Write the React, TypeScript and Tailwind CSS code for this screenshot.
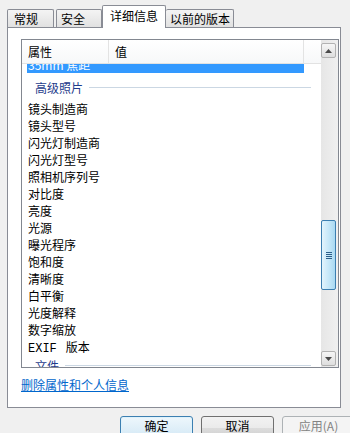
import React from 'react';

const items = [
  '镜头制造商',
  '镜头型号',
  '闪光灯制造商',
  '闪光灯型号',
  '照相机序列号',
  '对比度',
  '亮度',
  '光源',
  '曝光程序',
  '饱和度',
  '清晰度',
  '白平衡',
  '光度解释',
  '数字缩放',
];

const Arrow: React.FC<{ down?: boolean }> = ({ down = false }) => (
  <svg width="7" height="4" viewBox="0 0 7 4" className={down ? 'rotate-180' : ''}>
    <polygon points="3.5,0 7,4 0,4" fill="#4a4a4a" />
  </svg>
);

const ScrollButton: React.FC<{ down?: boolean; className?: string }> = ({ down, className = '' }) => (
  <div
    className={`w-[15px] h-[15px] rounded-[2px] border border-[#b2b2b2] bg-gradient-to-b from-[#f6f6f6] to-[#dedede] flex items-center justify-center ${className}`}
  >
    <Arrow down={down} />
  </div>
);

const App: React.FC = () => {
  return (
    <div className="w-[350px] h-[433px] overflow-hidden bg-[#f0f0f0] text-[12px] text-black font-['Noto_Sans_CJK_SC','Liberation_Sans',sans-serif] select-none">
      {/* tabs */}
      <div className="flex items-end h-[27px] pl-[7px]">
        <div className="w-[47px] h-[18px] pl-[6px] flex items-center leading-[16px] rounded-t-[2px] border border-b-0 border-[#898c95] bg-gradient-to-b from-[#f4f4f4] to-[#e1e1e1]">
          常规
        </div>
        <div className="ml-[2px] w-[46px] h-[18px] pl-[4px] flex items-center leading-[16px] rounded-t-[2px] border border-b-0 border-[#898c95] bg-gradient-to-b from-[#f4f4f4] to-[#e1e1e1]">
          安全
        </div>
        <div className="relative z-10 -mb-px w-[64px] h-[23px] pl-[7px] pt-[2px] leading-[16px] rounded-t-[2px] border border-b-0 border-[#898c95] bg-white">
          详细信息
        </div>
        <div className="w-[68px] h-[18px] pl-[4px] flex items-center leading-[16px] rounded-t-[2px] border border-b-0 border-l-0 border-[#898c95] bg-gradient-to-b from-[#f4f4f4] to-[#e1e1e1]">
          以前的版本
        </div>
      </div>

      {/* panel */}
      <div className="ml-[7px] w-[334px] h-[381px] border border-[#898c95] bg-white pl-[13px] pt-[11px]">
        <div className="w-[318px] h-[329px] border border-[#828790] flex">
          <div className="w-[299px] flex flex-col overflow-hidden">
            {/* header */}
            <div className="h-[24px] shrink-0 flex border-b border-[#e2e2e2] bg-gradient-to-b from-white to-[#f7f8f9]">
              <div className="w-[87px] pl-[6px] flex items-center border-r border-[#e3e3e3]">属性</div>
              <div className="w-[195px] pl-[6px] flex items-center border-r border-[#e3e3e3]">值</div>
              <div className="flex-1" />
            </div>

            {/* selected row, scrolled half out */}
            <div className="h-[9px] shrink-0 overflow-hidden">
              <div className="ml-[5px] w-[277px] h-[17px] -mt-[8px] bg-[#3399ff] text-white leading-[17px] pl-[1px]">
                35mm 焦距
              </div>
            </div>

            {/* group header */}
            <div className="h-[27px] shrink-0 pt-[2px] flex items-center pl-[13px] pr-[10px]">
              <span className="text-[#1e3c8c] leading-[16px]">高级照片</span>
              <div className="ml-[6px] flex-1 h-px bg-[#cbd7e3]" />
            </div>

            {items.map((label) => (
              <div key={label} className="h-[17px] shrink-0 leading-[17px] pl-[6px]">
                {label}
              </div>
            ))}
            <div className="h-[17px] shrink-0 leading-[17px] pl-[6px]">
              <span className="font-['Liberation_Mono',monospace] mr-[9px]">EXIF</span>
              版本
            </div>

            <div className="h-[21px] shrink-0 flex items-center pl-[13px] pr-[10px]">
              <span className="text-[#1e3c8c] leading-[16px]">文件</span>
              <div className="ml-[6px] flex-1 h-px bg-[#cbd7e3]" />
            </div>
          </div>

          {/* scrollbar */}
          <div className="w-[17px] bg-gradient-to-r from-[#e6e6e6] to-[#f0f0f0] flex flex-col">
            <ScrollButton className="mt-[3px]" />
            <div className="mt-[162px] w-[15px] h-[70px] rounded-[2px] border border-[#3c7fb1] bg-gradient-to-r from-[#e3f4fc] via-[#c6e8f9] to-[#aad9f2] flex flex-col items-center justify-center gap-[1px]">
              <div className="w-[6px] h-px bg-[#2c5f8a]" />
              <div className="w-[6px] h-px bg-[#2c5f8a]" />
              <div className="w-[6px] h-px bg-[#2c5f8a]" />
              <div className="w-[6px] h-px bg-[#2c5f8a]" />
            </div>
            <ScrollButton down className="mt-[61px]" />
          </div>
        </div>

        <a className="mt-[9px] block w-fit leading-[16px] text-[#0066cc] underline cursor-pointer">
          删除属性和个人信息
        </a>
      </div>

      {/* buttons */}
      <div className="flex gap-[8px] pl-[120px] mt-[8px]">
        <div className="w-[73px] h-[23px] shrink-0 rounded-[3px] border border-[#3c7fb1] bg-gradient-to-b from-[#eef7fc] to-[#d3e8f5] shadow-[inset_0_0_0_1px_#dff2fb] text-center pt-[1px] leading-[16px]">
          确定
        </div>
        <div className="w-[73px] h-[23px] shrink-0 rounded-[3px] border border-[#707070] bg-[linear-gradient(#f2f2f2_0%,#ebebeb_50%,#dddddd_51%,#cfcfcf_100%)] text-center pt-[1px] leading-[16px]">
          取消
        </div>
        <div className="w-[73px] h-[23px] shrink-0 rounded-[3px] border border-[#adb2b5] bg-[#f4f4f4] text-[#838383] text-center pt-[1px] leading-[16px]">
          应用(A)
        </div>
      </div>
    </div>
  );
};

export default App;
